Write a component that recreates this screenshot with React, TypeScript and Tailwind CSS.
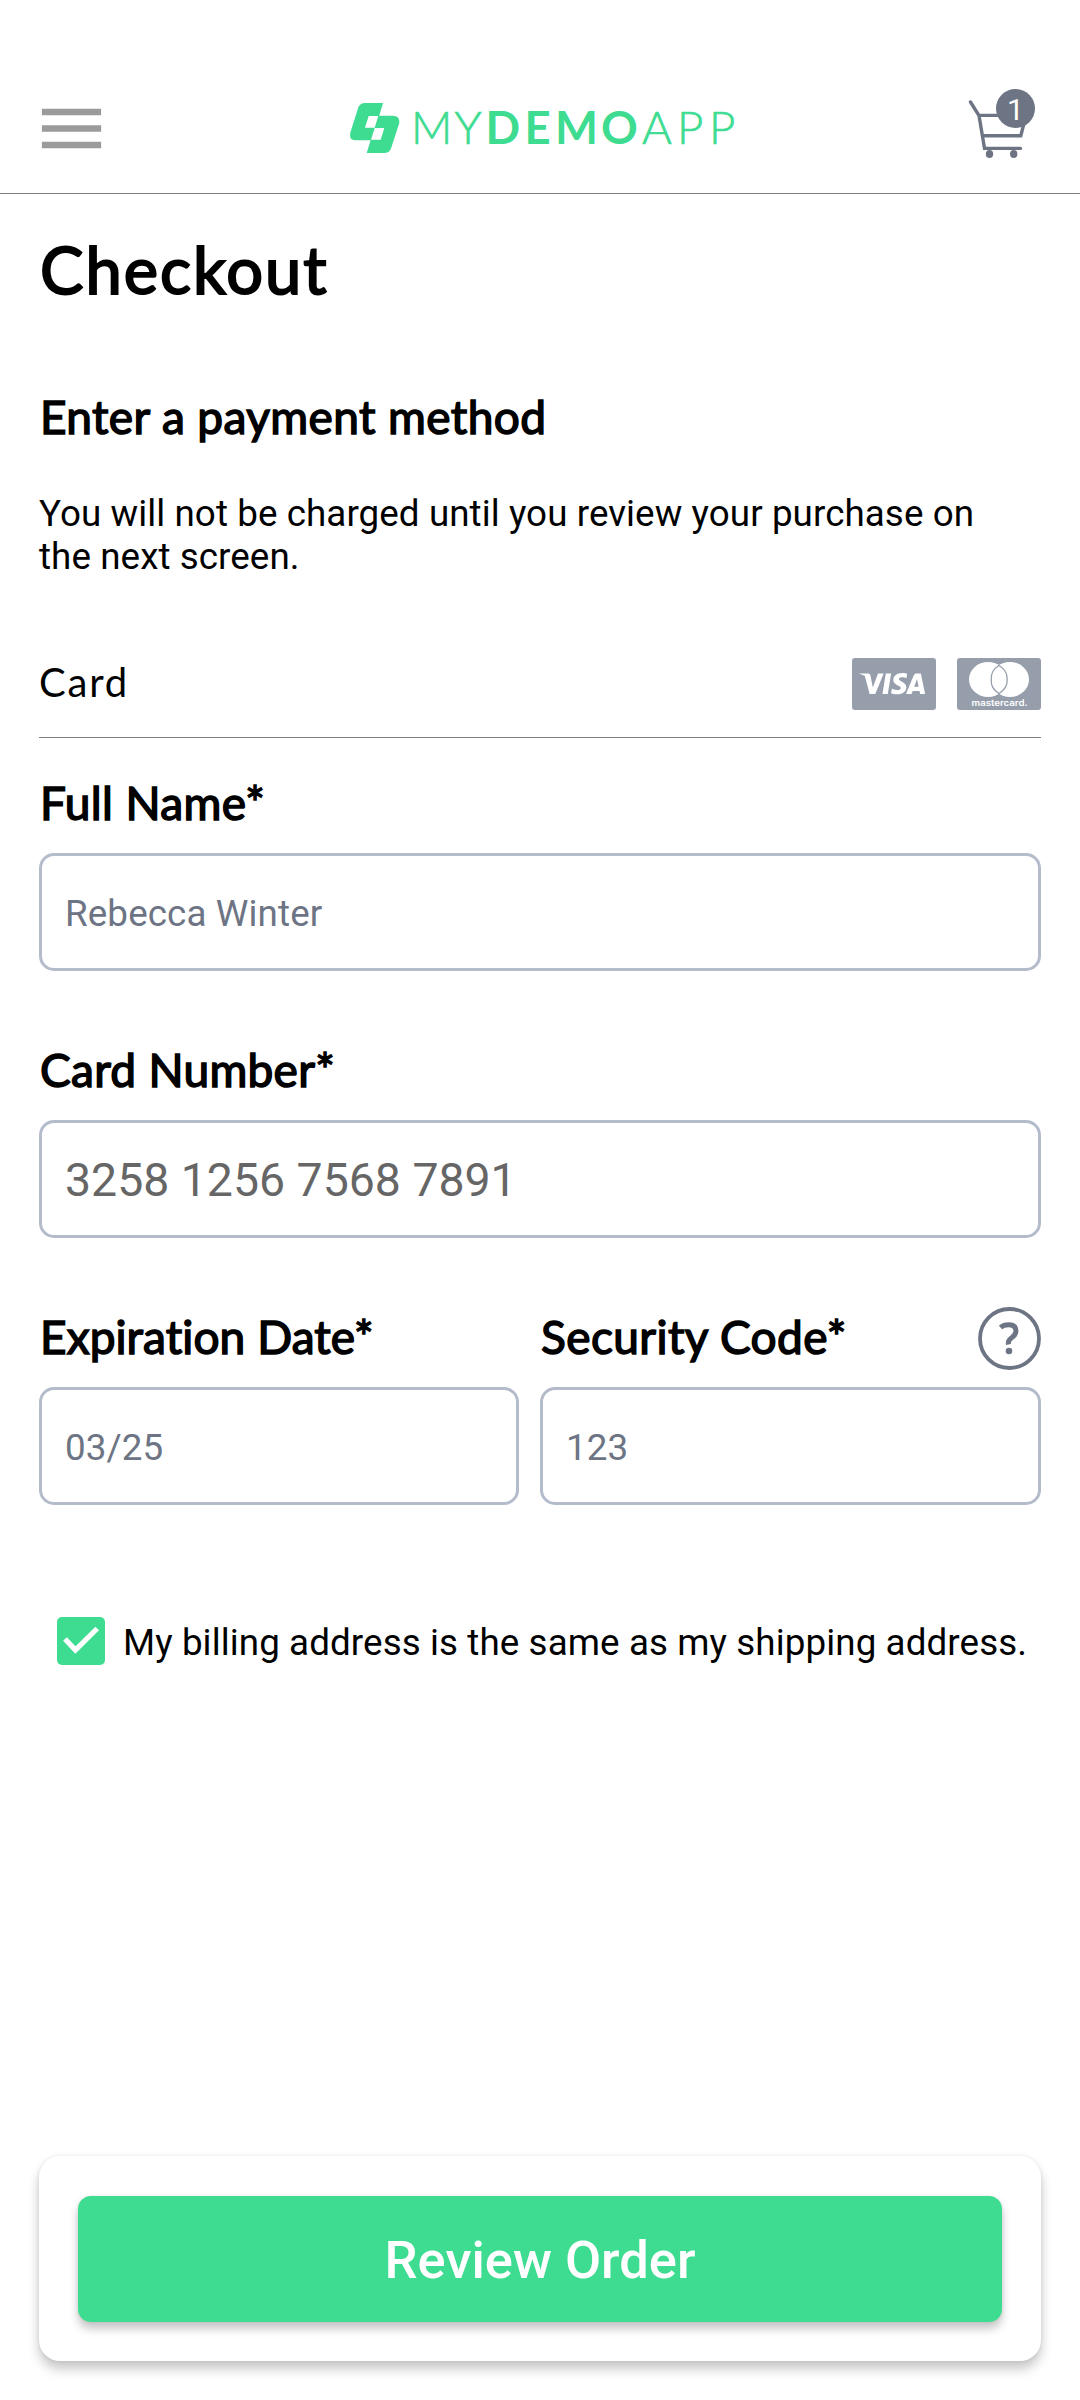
import type { ReactNode } from "react";
import { FaCcVisa } from "react-icons/fa";

function MenuIcon() {
  return (
    <svg className="h-[79px] w-[79px]" viewBox="0 0 24 24" fill="#9b9b9b">
      <path d="M3 18h18v-2H3v2zm0-5h18v-2H3v2zm0-7v2h18V6H3z" />
    </svg>
  );
}

function Logo() {
  return (
    <svg className="h-[60px] w-[388px]" viewBox="0 -4 388 60" fill="#3ddc91">
      <path
        fillRule="evenodd"
        d="M34 1H16Q11 1 9.300 5.500L1.500 30Q-.5 38.300 7 38.300H21.600L17.700 51H35Q40.300 51 42 46.500L50.300 21Q51 13.700 44 13.700H30.200ZM19.700 14H29.300L25.700 25.700H16ZM25.700 26H35.300L31.700 37.700H22Z"
      />
      <g fontFamily="Lato" fontSize="45.500">
        <text x="62 105.500" y="42" fontWeight="300" stroke="#3ddc91" strokeWidth="0.700">MY</text>
        <text x="136.500 175.500 206 252" y="42" fontWeight="700">DEMO</text>
        <text x="293 328 360" y="42" fontWeight="300" stroke="#3ddc91" strokeWidth="0.700">APP</text>
      </g>
    </svg>
  );
}

function Cart() {
  return (
    <div className="relative h-[80px] w-[72px]">
      <svg className="h-[80px] w-[72px]" viewBox="965 84 72 80" fill="none" stroke="#6d7484" strokeWidth="3.400">
        <path d="M970.500 102L979 115.500L984.500 148.400H1020.500" strokeLinecap="round" />
        <path d="M979 115.400H1026L1020.800 135.700H983" />
        <ellipse cx="989.500" cy="154" rx="3.700" ry="4" fill="#6d7484" stroke="none" />
        <ellipse cx="1013.700" cy="154" rx="3.700" ry="4" fill="#6d7484" stroke="none" />
      </svg>
      <span className="absolute left-[31px] top-[5px] flex h-[39px] w-[39px] items-center justify-center rounded-full bg-[#6d7484] pt-[2px] text-[30px] leading-none text-white">
        1
      </span>
    </div>
  );
}

function VisaBadge() {
  return (
    <div className="relative h-[52px] w-[84px] overflow-hidden rounded-[3px] bg-[#969eac]">
      <div className="absolute left-[5px] top-[14px] h-[25px] w-[70px] bg-white" />
      <FaCcVisa className="absolute left-[2.5px] top-[-8px] h-[68px] w-[76.5px] text-[#969eac]" />
    </div>
  );
}

function MastercardBadge() {
  return (
    <svg className="h-[52px] w-[84px]" viewBox="0 0 84 52">
      <rect width="84" height="52" rx="3" fill="#969eac" />
      <ellipse cx="31" cy="21.500" rx="19" ry="17.500" fill="#fff" />
      <ellipse cx="53" cy="21.500" rx="19" ry="17.500" fill="#fff" />
      <path d="M42 7.500Q33.500 12.500 34.300 21.500Q33.500 30.500 42 35.500Q50.500 30.500 50.200 21.500Q50.500 12.500 42 7.500Z" fill="none" stroke="#969eac" strokeWidth="1.300" />
      <text x="14.500" y="48" fontFamily="Inter" fontSize="9" fontWeight="600" textLength="56" lengthAdjust="spacingAndGlyphs" fill="#fff">mastercard.</text>
    </svg>
  );
}

function HelpIcon() {
  return (
    <svg className="h-[63px] w-[63px]" viewBox="0 0 63 63" fill="none" stroke="#6d7484">
      <circle cx="31.500" cy="31.500" r="29.500" strokeWidth="3.800" />
      <path d="M22.500 20.500Q25.500 17.800 30.500 17.800Q38 17.800 38 24Q38 27.500 34 30.500Q29.500 33.500 30.500 37.500" strokeWidth="5" />
      <circle cx="31" cy="44" r="3.300" fill="#6d7484" stroke="none" />
    </svg>
  );
}

function Label({ children, className }: { children: ReactNode; className: string }) {
  return (
    <div className={"pl-[1px] font-[Lato] text-[46px] leading-[56px] whitespace-nowrap [font-variant-ligatures:none] [-webkit-text-stroke:1.5px_black] " + className}>
      {children}
    </div>
  );
}

function Field({ value, className }: { value: string; className: string }) {
  return (
    <input
      readOnly
      defaultValue={value}
      className={"block h-[118px] rounded-[15px] border-[3px] border-[#b4bccc] bg-white pt-[2px] pl-[23px] outline-none " + className}
    />
  );
}

export default function App() {
  return (
    <div className="flex h-[2400px] w-[1080px] flex-col overflow-hidden bg-white font-[Roboto,sans-serif] text-black">
      <header className="flex h-[194px] items-start justify-between border-b border-[#808080] pr-[43px] pl-[32px]">
        <div className="pt-[89px]"><MenuIcon /></div>
        <div className="pt-[98px] pl-[10px]"><Logo /></div>
        <div className="pt-[84px]"><Cart /></div>
      </header>

      <main className="flex flex-col px-[39px]">
        <h1 className="mt-[33px] mb-[1px] pl-[1px] font-[Lato] text-[65px] leading-[84px] tracking-[2px] [-webkit-text-stroke:2px_black]">Checkout</h1>
        <Label className="mt-[77px] tracking-[0.4px]">Enter a payment method</Label>
        <p className="mt-[47px] max-w-[960px] text-[36.75px] leading-[43px] tracking-[0.08px]">
          You will not be charged until you review your purchase on the next screen.
        </p>

        <div className="mt-[45px] flex h-[115px] items-center justify-between border-b border-[#808080] pt-[8px]">
          <span className="pb-[4px] font-[Lato] text-[40px] leading-[46px] tracking-[1.8px]">Card</span>
          <div className="flex gap-[21px]">
            <VisaBadge />
            <MastercardBadge />
          </div>
        </div>

        <Label className="mt-[37px] tracking-[0.4px]">Full Name*</Label>
        <Field value="Rebecca Winter" className="mt-[22px] w-full text-[36.75px] tracking-[0.12px] text-[#6d7484]" />

        <Label className="mt-[71px] tracking-[0.3px]">Card Number*</Label>
        <Field value="3258 1256 7568 7891" className="mt-[22px] w-full text-[46.4px] text-[#666666]" />

        <div className="mt-[69px] flex gap-[21px]">
          <div className="w-[480px]">
            <Label className="mt-[2px] tracking-[0.08px]">Expiration Date*</Label>
            <Field value="03/25" className="mt-[22px] w-full text-[36.75px] tracking-[0.12px] text-[#6d7484]" />
          </div>
          <div className="w-[501px]">
            <div className="flex h-[63px] items-start justify-between">
              <Label className="mt-[2px] tracking-[0.4px]">Security Code*</Label>
              <HelpIcon />
            </div>
            <Field value="123" className="mt-[17px] w-full text-[36.75px] tracking-[0.12px] text-[#6d7484]" />
          </div>
        </div>

        <div className="mt-[112px] flex items-center pl-[18px]">
          <svg className="h-[48px] w-[48px]" viewBox="0 0 48 48">
            <rect width="48" height="48" rx="5" fill="#3ddc91" />
            <path d="M8 22L18.400 33L40.200 11.500" fill="none" stroke="#fff" strokeWidth="5.200" />
          </svg>
          <span className="pt-[2px] pl-[18px] text-[36.75px] leading-[43px] tracking-[0.1px] whitespace-nowrap">
            My billing address is the same as my shipping address.
          </span>
        </div>
      </main>

      <div className="mx-[39px] mt-auto mb-[39px] h-[205px] rounded-[21px] bg-white px-[39px] pt-[40px] shadow-[0_8px_12px_rgba(0,0,0,0.22),0_0_4px_rgba(0,0,0,0.08)]">
        <button className="h-[126px] w-full rounded-[13px] bg-[#3ddc91] pt-[3px] text-[52.5px] font-medium text-white shadow-[0_7px_10px_rgba(0,0,0,0.22),0_0_4px_rgba(0,0,0,0.08)]">
          Review Order
        </button>
      </div>
    </div>
  );
}
